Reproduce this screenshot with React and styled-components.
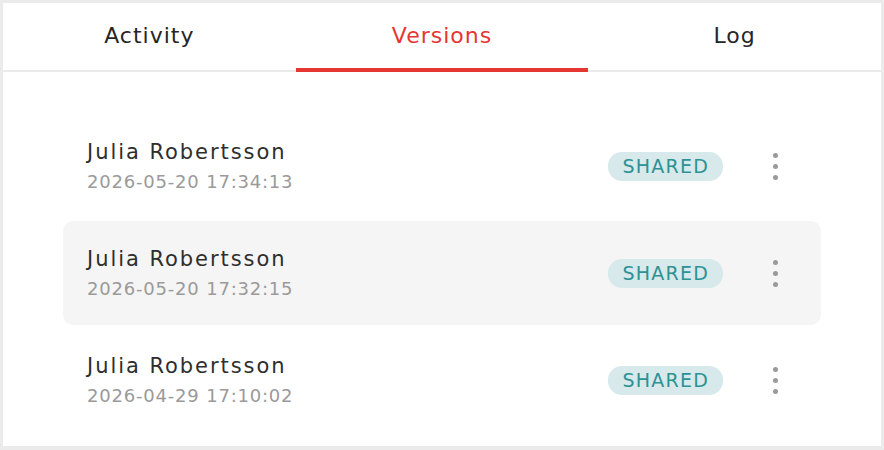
import React, { useState } from 'react';
import styled, { createGlobalStyle } from 'styled-components';

const GlobalStyle = createGlobalStyle`
  html, body { margin: 0; padding: 0; background: #ebebeb; }
  body { font-family: "DejaVu Sans", "Open Sans", sans-serif; }
  * { box-sizing: border-box; }
`;

const Frame = styled.div`
  width: 884px;
  height: 450px;
  padding: 3px 3px 4px 3px;
  background: #ebebeb;
`;

const Panel = styled.div`
  height: 100%;
  background: #fff;
  display: flex;
  flex-direction: column;
`;

const TabBar = styled.div`
  display: grid;
  grid-template-columns: repeat(3, 1fr);
  height: 69px;
  border-bottom: 2px solid #ebebeb;
`;

const Tab = styled.button`
  border: none;
  background: none;
  font-family: inherit;
  font-size: 22px;
  font-weight: 500;
  letter-spacing: 1px;
  color: ${p => (p.active ? '#e53632' : '#262626')};
  position: relative;
  padding: 0 0 2px;
  cursor: pointer;
  &::after {
    content: '';
    display: ${p => (p.active ? 'block' : 'none')};
    position: absolute;
    left: 0;
    right: 0;
    bottom: -2px;
    height: 4px;
    background: #e53632;
  }
`;

const List = styled.div`
  padding: 42px 60px 0;
  display: flex;
  flex-direction: column;
  gap: 3px;
`;

const Row = styled.div`
  height: 104px;
  display: flex;
  align-items: center;
  padding: 0 39px 0 24px;
  border-radius: 10px;
  background: ${p => (p.highlight ? '#f5f5f5' : 'transparent')};
`;

const Info = styled.div`
  flex: 1;
  display: flex;
  flex-direction: column;
  gap: 7px;
`;

const Name = styled.div`
  font-size: 21px;
  letter-spacing: 1.95px;
  color: #2e2e2e;
`;

const Stamp = styled.div`
  font-size: 18px;
  letter-spacing: 0.8px;
  color: #9a9a9a;
`;

const Badge = styled.span`
  background: #d7e9ea;
  color: #2d9294;
  font-size: 19px;
  font-weight: 500;
  letter-spacing: 1.2px;
  padding: 3px 14px 4px 15px;
  border-radius: 14px;
  margin-right: 45px;
`;

const Kebab = styled.button`
  border: none;
  background: none;
  padding: 0;
  width: 14px;
  display: flex;
  flex-direction: column;
  align-items: center;
  gap: 6px;
  cursor: pointer;
`;

const Dot = styled.span`
  width: 5px;
  height: 5px;
  border-radius: 50%;
  background: #9a9a9a;
`;

const versions = [
  { name: 'Julia Robertsson', time: '2026-05-20 17:34:13' },
  { name: 'Julia Robertsson', time: '2026-05-20 17:32:15' },
  { name: 'Julia Robertsson', time: '2026-04-29 17:10:02' },
];

const App = () => {
  const [tab, setTab] = useState('Versions');
  const [hovered, setHovered] = useState(1);

  return (
    <Frame>
      <GlobalStyle />
      <Panel>
        <TabBar>
          {['Activity', 'Versions', 'Log'].map(t => (
            <Tab key={t} active={tab === t} onClick={() => setTab(t)}>{t}</Tab>
          ))}
        </TabBar>
        <List>
          {versions.map((v, i) => (
            <Row key={v.time} highlight={hovered === i} onMouseEnter={() => setHovered(i)}>
              <Info>
                <Name>{v.name}</Name>
                <Stamp>{v.time}</Stamp>
              </Info>
              <Badge>SHARED</Badge>
              <Kebab aria-label="More">
                <Dot /><Dot /><Dot />
              </Kebab>
            </Row>
          ))}
        </List>
      </Panel>
    </Frame>
  );
};

export default App;
